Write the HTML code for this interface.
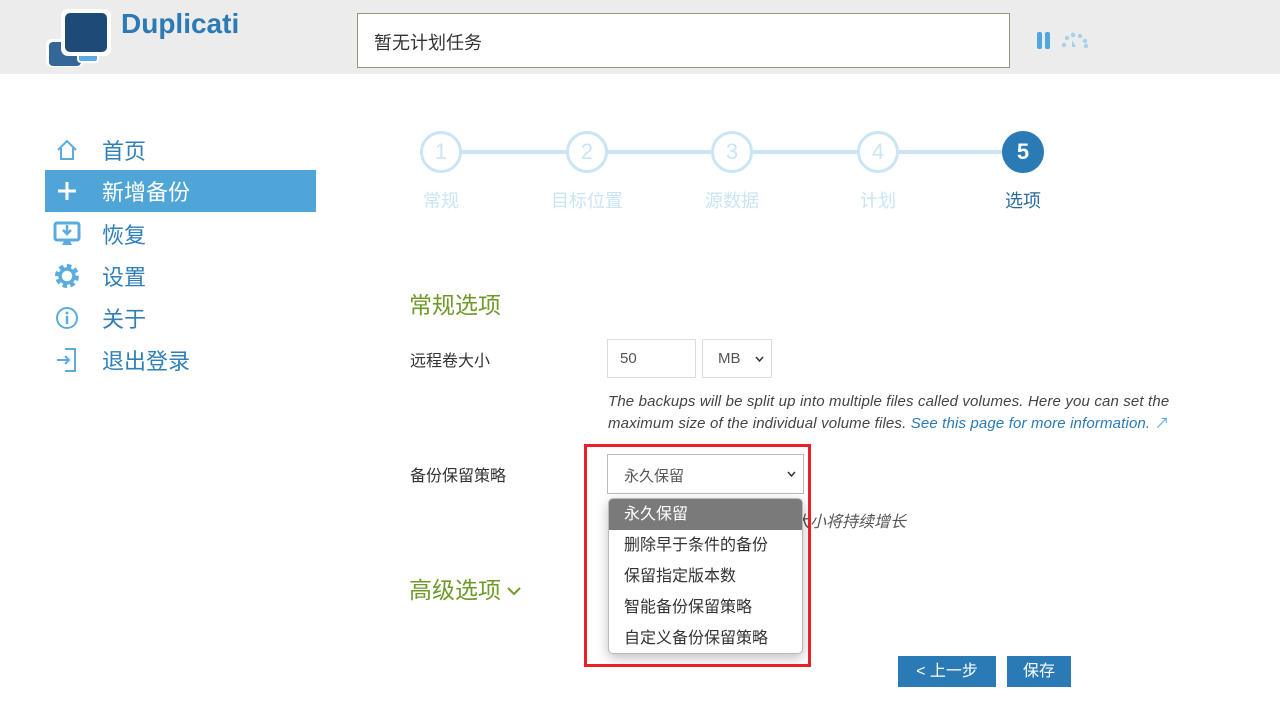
<!DOCTYPE html>
<html><head><meta charset="utf-8"><style>
*{box-sizing:border-box;margin:0;padding:0}
body{width:1280px;height:701px;overflow:hidden;background:#fff;font-family:"Liberation Sans","Noto Sans CJK SC",sans-serif;position:relative;color:#333}
.a{position:absolute}
.hdr{left:0;top:0;width:1280px;height:74px;background:#ececec}
.nav{left:45px;width:271px;height:42px;font-size:22px;color:#2f7fb8;display:flex;align-items:center}
.nav span{position:absolute;left:57px}
.circ{width:42px;height:42px;border-radius:50%;border:3px solid #c9e5f6;background:#fff;color:#c9e5f6;font-size:22px;display:flex;align-items:center;justify-content:center;top:131px}
.lab{top:187px;font-size:18px;color:#c9e5f6;width:120px;text-align:center}
.box{border:1px solid #ddd;background:#fff;font-size:15px;color:#555}
.dd div{height:31px;line-height:31px;padding-left:15px;font-size:16px;color:#333}
.chev{position:absolute;right:7px;top:50%;margin-top:-3px}
</style></head><body>
<div class="a hdr"></div>
<svg class="a" style="left:44px;top:8px" width="70" height="60">
<rect x="2" y="31" width="38" height="28" rx="6" fill="#fff"/><rect x="5" y="34" width="32" height="24" rx="4" fill="#336699"/>
<rect x="34" y="40" width="20" height="14" rx="3" fill="#5aace0" stroke="#fff" stroke-width="2"/>
<rect x="17" y="1" width="50" height="47" rx="7" fill="#fff"/><rect x="21" y="5" width="42" height="39" rx="5" fill="#1e4a78"/>
</svg>
<div class="a" style="left:121px;top:8px;font-size:28px;font-weight:bold;color:#2a7ab5">Duplicati</div>
<div class="a" style="left:357px;top:13px;width:653px;height:55px;background:#fff;border:1px solid #8c9a7a;font-size:18px;padding:15px 16px;color:#333">暂无计划任务</div>
<div class="a" style="left:1037px;top:32px;width:5px;height:17px;background:#4fa8dd;border-radius:2px"></div>
<div class="a" style="left:1045px;top:32px;width:5px;height:17px;background:#4fa8dd;border-radius:2px"></div>
<svg class="a" style="left:1061px;top:32px" width="28" height="18"><g fill="#a5d0ee"><circle cx="3" cy="13" r="2.2"/><circle cx="6" cy="6" r="2.2"/><circle cx="12" cy="3" r="2.2"/><circle cx="19" cy="4" r="2.2"/><circle cx="24" cy="9" r="2.2"/><circle cx="25" cy="14" r="2.2"/><path d="M11 8 L15 15 L11 15Z"/></g></svg>

<div class="a nav" style="top:129px"><svg style="margin-left:10px" width="24" height="24"><path d="M3 12 L12 3 L21 12 M6 10 V21 H18 V10" fill="none" stroke="#5aace0" stroke-width="2"/></svg><span>首页</span></div>
<div class="a nav" style="top:170px;background:#4fa5d8;color:#fff"><svg style="margin-left:10px" width="24" height="24"><path d="M12 3V21M3 12H21" stroke="#fff" stroke-width="3"/></svg><span>新增备份</span></div>
<div class="a nav" style="top:213px"><svg style="margin-left:8px" width="28" height="26"><rect x="2" y="2" width="24" height="17" rx="2" fill="none" stroke="#5aace0" stroke-width="3"/><path d="M14 4V13M10 9L14 13L18 9" fill="none" stroke="#5aace0" stroke-width="2.5"/><path d="M9 24H19L17 20H11Z" fill="#5aace0"/></svg><span>恢复</span></div>
<div class="a nav" style="top:255px"><svg style="margin-left:9px" width="26" height="26"><circle cx="13" cy="13" r="9" fill="none" stroke="#5aace0" stroke-width="6" stroke-dasharray="4 3"/><circle cx="13" cy="13" r="7" fill="none" stroke="#5aace0" stroke-width="3.5"/></svg><span>设置</span></div>
<div class="a nav" style="top:297px"><svg style="margin-left:10px" width="24" height="24"><circle cx="12" cy="12" r="10" fill="none" stroke="#5aace0" stroke-width="2"/><circle cx="12" cy="7" r="1.5" fill="#5aace0"/><path d="M12 10V18" stroke="#5aace0" stroke-width="2.5"/></svg><span>关于</span></div>
<div class="a nav" style="top:339px"><svg style="margin-left:10px" width="24" height="26"><path d="M10 2H20V24H10" fill="none" stroke="#5aace0" stroke-width="2"/><path d="M2 13H14M10 9L14 13L10 17" fill="none" stroke="#5aace0" stroke-width="2"/></svg><span>退出登录</span></div>

<div class="a" style="left:440px;top:150px;width:584px;height:4px;background:#c9e5f6"></div>
<div class="a circ" style="left:420px">1</div>
<div class="a circ" style="left:566px">2</div>
<div class="a circ" style="left:711px">3</div>
<div class="a circ" style="left:857px">4</div>
<div class="a circ" style="left:1002px;background:#2a7ab5;border-color:#2a7ab5;color:#fff;font-weight:bold">5</div>
<div class="a lab" style="left:381px">常规</div>
<div class="a lab" style="left:527px">目标位置</div>
<div class="a lab" style="left:672px">源数据</div>
<div class="a lab" style="left:818px">计划</div>
<div class="a lab" style="left:963px;color:#2a6a9a">选项</div>

<div class="a" style="left:409px;top:286px;font-size:23px;color:#6f9a2a">常规选项</div>
<div class="a" style="left:410px;top:347px;font-size:16px">远程卷大小</div>
<div class="a box" style="left:607px;top:339px;width:89px;height:39px;padding:10px 12px">50</div>
<div class="a box" style="left:702px;top:339px;width:70px;height:39px;padding:10px 15px">MB <svg class="chev" width="9" height="6"><path d="M1 1L4.5 5L8 1" fill="none" stroke="#333" stroke-width="1.5"/></svg></div>
<div class="a" style="left:608px;top:391px;width:625px;font-size:15px;font-style:italic;line-height:22px;color:#444;letter-spacing:0.15px">The backups will be split up into multiple files called volumes. Here you can set the maximum size of the individual volume files. <span style="color:#2a7ab5">See this page for more information.</span> <span style="color:#5aace0;font-style:normal">&#8599;</span></div>
<div class="a" style="left:410px;top:462px;font-size:16px">备份保留策略</div>
<div class="a box" style="left:607px;top:454px;width:197px;height:40px;padding:10px 16px;border-color:#bbb">永久保留<svg class="chev" width="9" height="6"><path d="M1 1L4.5 5L8 1" fill="none" stroke="#333" stroke-width="1.5"/></svg></div>
<div class="a" style="left:794px;top:508px;font-size:16px;font-style:italic;color:#555">大小将持续增长</div>
<div class="a" style="left:409px;top:571px;font-size:23px;color:#6f9a2a">高级选项 <svg width="14" height="9" style="vertical-align:middle"><path d="M1 1L7 7L13 1" fill="none" stroke="#6f9a2a" stroke-width="2"/></svg></div>
<div class="a dd" style="left:608px;top:498px;width:195px;height:156px;background:#fff;border:1px solid #bbb;border-radius:5px;overflow:hidden;box-shadow:0 4px 12px rgba(0,0,0,.25)">
<div style="background:#7a7a7a;color:#fff">永久保留</div><div>删除早于条件的备份</div><div>保留指定版本数</div><div>智能备份保留策略</div><div>自定义备份保留策略</div></div>
<div class="a" style="left:584px;top:444px;width:227px;height:223px;border:3px solid #e8202a"></div>
<div class="a" style="left:898px;top:656px;width:98px;height:31px;background:#2a7ab5;color:#fff;font-size:16px;text-align:center;line-height:31px">&lt; 上一步</div>
<div class="a" style="left:1007px;top:656px;width:64px;height:31px;background:#2a7ab5;color:#fff;font-size:16px;text-align:center;line-height:31px">保存</div>
</body></html>
